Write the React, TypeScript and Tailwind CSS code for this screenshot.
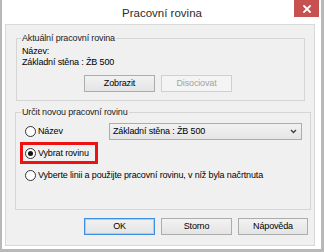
const Radio = ({ checked = false }: { checked?: boolean }) => (
  <span className="flex h-[11px] w-[11px] shrink-0 items-center justify-center rounded-full border border-[#333] bg-white">
    {checked && <span className="h-[5px] w-[5px] rounded-full bg-[#111]" />}
  </span>
);

const Button = ({
  label,
  variant = "normal",
  width = "w-[71px]",
}: {
  label: string;
  variant?: "normal" | "disabled" | "default";
  width?: string;
}) => {
  const look =
    variant === "disabled"
      ? "border-[#d0d0d0] bg-[#f4f4f4] text-[#a3a3a3]"
      : variant === "default"
        ? "border-[#3d8fe6] bg-linear-to-b from-[#f2f2f2] to-[#e4e4e4] text-black shadow-[inset_0_0_0_1px_#a8cff4]"
        : "border-[#acacac] bg-linear-to-b from-[#f2f2f2] to-[#e4e4e4] text-black";
  return (
    <div
      className={`flex h-[17px] items-center justify-center border ${width} ${look}`}
    >
      {label}
    </div>
  );
};

export default function App() {
  return (
    <div className="flex h-[252px] w-[324px] flex-col border-b-[3px] border-l-2 border-r-[3px] border-[#b8b8b8] bg-white pb-[3px] pl-[3px] pr-[6px] font-['Liberation_Sans',Arial,sans-serif] text-[9px] leading-[11px] tracking-[-0.15px] text-black">
      {/* title bar */}
      <div className="grid h-[24px] grid-cols-[1fr_auto_1fr]">
        <div />
        <div className="pl-[4px] pt-[6px] text-[11.5px] leading-[14px] tracking-normal text-[#2b2b2b]">
          Pracovní rovina
        </div>
        <div className="flex justify-end">
          <div className="mr-[-4px] flex h-[17px] w-[25px] items-center justify-center bg-[#c75050]">
            <svg width="8" height="8" viewBox="0 0 8 8">
              <path
                d="M1 1L7 7M7 1L1 7"
                stroke="#fff"
                strokeWidth="1.8"
                strokeLinecap="square"
              />
            </svg>
          </div>
        </div>
      </div>

      {/* content */}
      <div className="h-[222px] w-[310px] border border-[#d9d9d9] bg-[#f0f0f0]">
        <fieldset className="ml-[10px] mt-[8px] w-[289px] border border-[#d5d5d5] pb-[8px] pl-[5px]">
          <legend className="ml-[-1px] px-[1px] text-[#222]">
            Aktuální pracovní rovina
          </legend>
          <div className="mt-[2px]">Název:</div>
          <div>Základní stěna : ŽB 500</div>
          <div className="ml-[62px] mt-[7px] flex gap-[6px]">
            <Button label="Zobrazit" />
            <Button label="Disociovat" variant="disabled" />
          </div>
        </fieldset>

        <fieldset className="ml-[9px] mt-[6px] w-[296px] border border-[#d5d5d5] pb-[26px] pl-[4px]">
          <legend className="ml-[1px] px-[1px] text-[#222]">
            Určit novou pracovní rovinu
          </legend>
          <div className="ml-[5px] mt-[5px] flex h-[17px] items-center">
            <div className="flex w-[84px] items-center gap-[2px]">
              <Radio />
              <span>Název</span>
            </div>
            <div className="flex h-[17px] w-[193px] items-center justify-between border border-[#acacac] bg-linear-to-b from-[#f2f2f2] to-[#e5e5e5] pl-[3px] pr-[4px]">
              <span>Základní stěna : ŽB 500</span>
              <svg width="7" height="5" viewBox="0 0 7 5">
                <path
                  d="M1 1L3.5 3.5L6 1"
                  stroke="#404040"
                  strokeWidth="1.4"
                  fill="none"
                />
              </svg>
            </div>
          </div>
          <div className="mt-[2px] flex h-[22px] w-[78px] items-center gap-[2px] border-[3px] border-[#ee1111] pl-[2px]">
            <Radio checked />
            <span>Vybrat rovinu</span>
          </div>
          <div className="ml-[5px] mt-[3px] flex h-[16px] items-center gap-[2px]">
            <Radio />
            <span>
              Vyberte linii a použijte pracovní rovinu, v níž byla načrtnuta
            </span>
          </div>
        </fieldset>

        <div className="ml-[78px] mt-[8px] flex gap-[6px]">
          <Button label="OK" variant="default" />
          <Button label="Storno" />
          <Button label="Nápověda" width="w-[70px]" />
        </div>
      </div>
    </div>
  );
}
